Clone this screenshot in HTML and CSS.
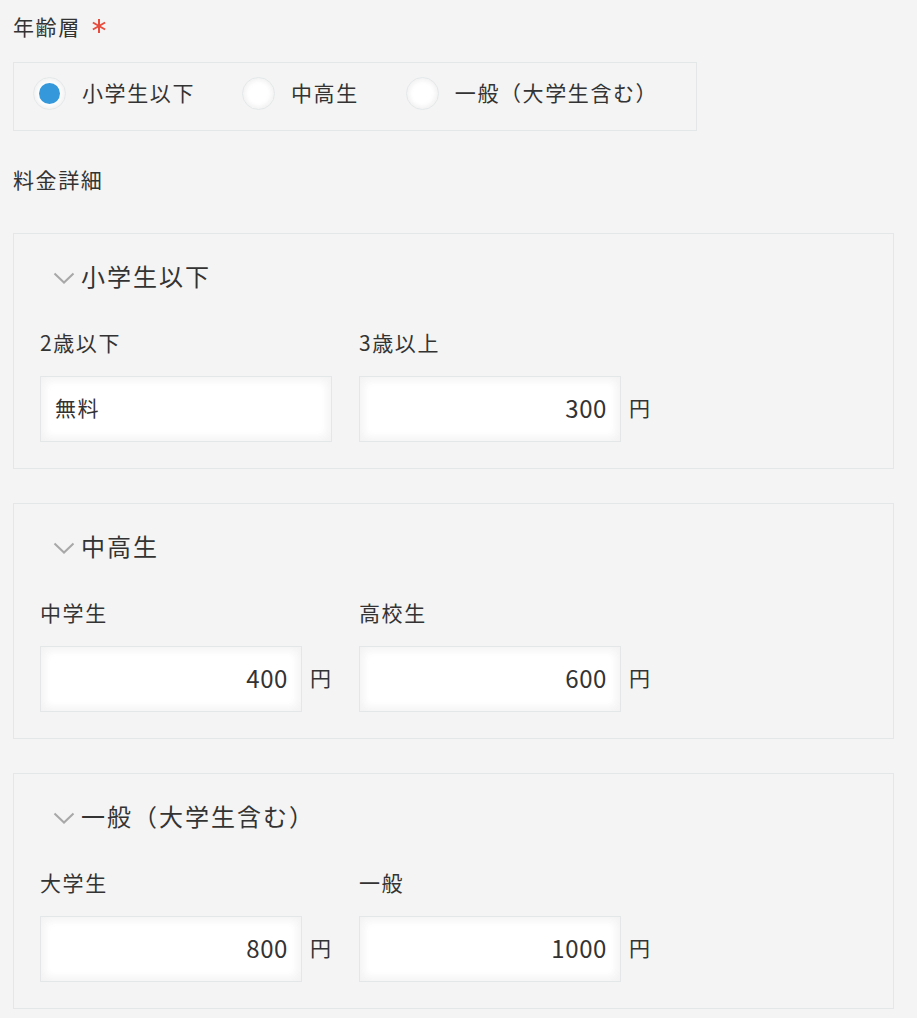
FILE: index.html
```html
<!DOCTYPE html>
<html lang="ja">
<head>
<meta charset="utf-8">
<title>料金詳細</title>
<link rel="stylesheet" href="styles.css">
</head>
<body>
<div class="form">
  <div class="field-label">年齢層<svg class="required" width="16" height="16" viewBox="0 0 16 16"><g stroke="#e74c3c" stroke-width="2" stroke-linecap="butt"><path d="M8 1 V15"/><path d="M1.9 4.5 L14.1 11.5"/><path d="M1.9 11.5 L14.1 4.5"/></g></svg></div>
  <div class="radio-group">
    <label class="radio-item">
      <span class="radio checked"><span class="dot"></span></span>
      <span class="radio-text">小学生以下</span>
    </label>
    <label class="radio-item">
      <span class="radio"></span>
      <span class="radio-text">中高生</span>
    </label>
    <label class="radio-item">
      <span class="radio"></span>
      <span class="radio-text">一般（大学生含む）</span>
    </label>
  </div>

  <div class="field-label section-label">料金詳細</div>

  <div class="group">
    <div class="group-title">
      <svg class="chevron" width="22" height="12" viewBox="0 0 22 12"><path d="M1.5 1.5 L11 10.5 L20.5 1.5" fill="none" stroke="#a8a8a8" stroke-width="2"/></svg>
      <span>小学生以下</span>
    </div>
    <div class="fields">
      <div class="field">
        <div class="sub-label">2歳以下</div>
        <div class="input-row"><div class="input input-wide">無料</div></div>
      </div>
      <div class="field">
        <div class="sub-label">3歳以上</div>
        <div class="input-row"><div class="input num">300</div><span class="unit">円</span></div>
      </div>
    </div>
  </div>

  <div class="group">
    <div class="group-title">
      <svg class="chevron" width="22" height="12" viewBox="0 0 22 12"><path d="M1.5 1.5 L11 10.5 L20.5 1.5" fill="none" stroke="#a8a8a8" stroke-width="2"/></svg>
      <span>中高生</span>
    </div>
    <div class="fields">
      <div class="field">
        <div class="sub-label">中学生</div>
        <div class="input-row"><div class="input num">400</div><span class="unit">円</span></div>
      </div>
      <div class="field">
        <div class="sub-label">高校生</div>
        <div class="input-row"><div class="input num">600</div><span class="unit">円</span></div>
      </div>
    </div>
  </div>

  <div class="group">
    <div class="group-title">
      <svg class="chevron" width="22" height="12" viewBox="0 0 22 12"><path d="M1.5 1.5 L11 10.5 L20.5 1.5" fill="none" stroke="#a8a8a8" stroke-width="2"/></svg>
      <span>一般（大学生含む）</span>
    </div>
    <div class="fields">
      <div class="field">
        <div class="sub-label">大学生</div>
        <div class="input-row"><div class="input num">800</div><span class="unit">円</span></div>
      </div>
      <div class="field">
        <div class="sub-label">一般</div>
        <div class="input-row"><div class="input num">1000</div><span class="unit">円</span></div>
      </div>
    </div>
  </div>
</div>
</body>
</html>
```

FILE: styles.css
```css
html, body {
  margin: 0;
  padding: 0;
  background: #f4f4f4;
}
body {
  font-family: "Noto Sans CJK JP", "Noto Sans", sans-serif;
  color: #333333;
  font-size: 21px;
  letter-spacing: 1.6px;
}
.form {
  padding: 13px 0 0 13px;
}
.field-label {
  height: 30px;
  box-sizing: border-box;
  padding-bottom: 4px;
  line-height: 26px;
  display: flex;
  align-items: center;
  white-space: nowrap;
}
.required {
  margin-left: 10px;
  flex: none;
}
.radio-group {
  margin-top: 19px;
  width: 684px;
  box-sizing: border-box;
  height: 69px;
  border: 1px solid #e3e7e8;
  padding: 14px 0 0 19px;
  display: flex;
  align-items: flex-start;
}
.radio-item {
  display: flex;
  align-items: center;
  margin-right: 47px;
  height: 33px;
  flex: none;
  white-space: nowrap;
}
.radio {
  width: 33px;
  height: 33px;
  box-sizing: border-box;
  border-radius: 50%;
  border: 1px solid #e3e7e8;
  background: #ffffff;
  box-shadow: 1px 1px 6px #f0f0f0 inset, -1px -1px 6px #f0f0f0 inset;
  display: flex;
  align-items: center;
  justify-content: center;
  flex: none;
}
.dot {
  width: 21px;
  height: 21px;
  border-radius: 50%;
  background: #3498db;
}
.radio-text {
  margin-left: 16px;
  line-height: 26px;
  padding-bottom: 4px;
}
.section-label {
  margin-top: 35px;
}
.group {
  margin-top: 37px;
  width: 881px;
  height: 236px;
  box-sizing: border-box;
  border: 1px solid #e3e7e8;
  padding: 27px 26px 0 26px;
}
.group + .group {
  margin-top: 34px;
}
.group-title {
  display: flex;
  align-items: center;
  height: 34px;
  box-sizing: border-box;
  padding-left: 13px;
  font-size: 24px;
  letter-spacing: 2px;
  white-space: nowrap;
}
.group-title span {
  line-height: 30px;
  padding-bottom: 4px;
}
.chevron {
  margin-right: 6px;
  flex: none;
}
.fields {
  margin-top: 34px;
  display: flex;
  gap: 27px;
}
.field {
  width: 292px;
}
.sub-label {
  height: 30px;
  box-sizing: border-box;
  line-height: 26px;
  padding-bottom: 4px;
  white-space: nowrap;
}
.input-row {
  margin-top: 17px;
  display: flex;
  align-items: center;
}
.input {
  height: 66px;
  box-sizing: border-box;
  width: 262px;
  background: #ffffff;
  border: 1px solid #e3e7e8;
  box-shadow: 1px 1px 12px #f2f2f2 inset, -1px -1px 12px #f2f2f2 inset;
  padding: 0 13px 4px 14px;
  display: flex;
  align-items: center;
  flex: none;
}
.input-wide {
  width: 292px;
}
.num {
  justify-content: flex-end;
  font-size: 24px;
  letter-spacing: 0.6px;
  padding-right: 13px;
}
.unit {
  margin-left: 8px;
  padding-bottom: 4px;
}
```
